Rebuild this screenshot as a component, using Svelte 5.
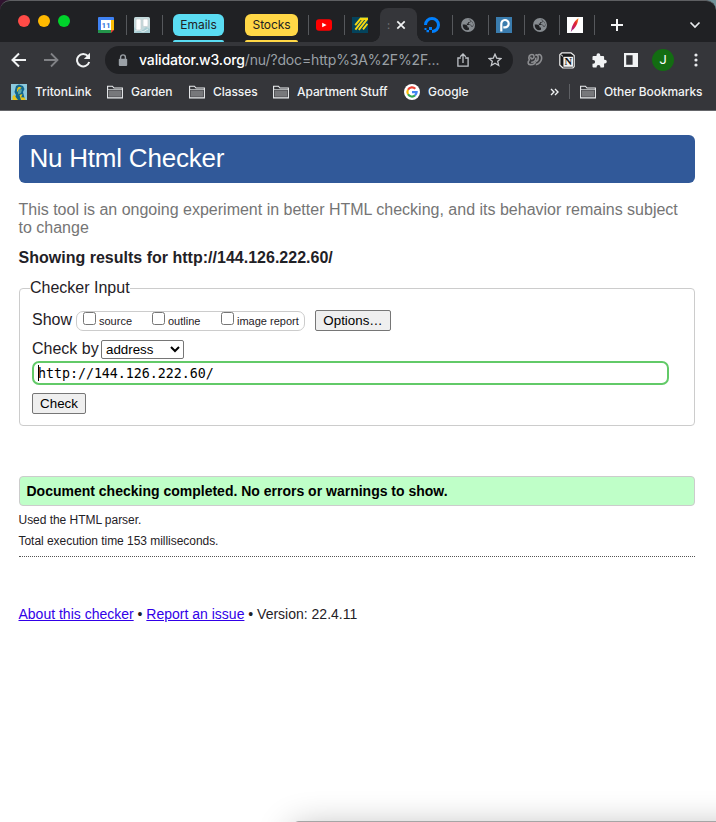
<script>
  let source = $state(false);
  let outline = $state(false);
  let imageReport = $state(false);
  let method = $state('address');
</script>

{#snippet folder()}
  <svg class="folder" width="16" height="14" viewBox="0 0 16 14">
    <path d="M.6 12.9V1.2H5.4L7 3H15.4V12.9Z" fill="#35363a" stroke="#eceef0" stroke-width="1.1" />
    <path d="M1.9 5.4H14.1V11.7H1.9Z" fill="#77787b" />
    <path d="M1 4.5H15" stroke="#c8cacc" stroke-width=".8" />
  </svg>
{/snippet}

{#snippet globe()}
  <svg width="16" height="16" viewBox="0 0 16 16">
    <circle cx="8" cy="8" r="7" fill="#868b90" />
    <path d="M2.7 7.4 5 7.4Q7.6 7.6 7.6 9.6V10.4H9V12.8Q5.4 14 3.6 11.2 2.6 9.4 2.7 7.4ZM8.2 2.8H10.4V4.2Q10.4 5 9.4 5H8.2V6.6H6.8V8H10Q11.2 8 11.2 9.6H13Q13.8 7.4 12.8 5.4 11.2 2.8 8.2 2.8Z" fill="#202124" />
    <path d="M10.8 3.8Q13.4 5.4 13.3 8.2L12 9.2Q11 7.2 8.6 7.2L9 5.8Q11 5.6 10.8 3.8Z" fill="#868b90" />
  </svg>
{/snippet}

<div class="window">
  <div class="frame">
    <div class="tabs">
      <div class="lights"><i class="red"></i><i class="yellow"></i><i class="green"></i></div>
      <div class="tab first">
        <svg width="16" height="16" viewBox="0 0 16 16">
          <path d="M0 1Q0 0 1 0H15Q16 0 16 1V12L12 16H1Q0 16 0 15Z" fill="#3f82f4" />
          <path d="M13 3H16V13H13Z" fill="#fbbc05" /><path d="M3 13H13V16H1Q0 16 0 15V13Z" fill="#23954a" />
          <path d="M13 13H16L13 16Z" fill="#ea4335" />
          <path d="M3 3H13V13H3Z" fill="#fff" />
          <text x="8" y="11" text-anchor="middle" font-family="Roboto, sans-serif" font-size="8" font-weight="700" fill="#3376dd">11</text>
        </svg>
      </div>
      <div class="tab">
        <svg width="16" height="16" viewBox="0 0 16 16">
          <rect width="16" height="16" rx="1.5" fill="#c3d9dc" />
          <path d="M0 10 4 14 9 13 12 10 16 12V16H0Z" fill="#a9cdd3" />
          <path d="M1 14 6 13 9 15 14 12" fill="none" stroke="#dfebec" />
          <rect x="2" y="2" width="5" height="11" rx="1.2" fill="#fff" stroke="#c9cfd0" stroke-width=".8" />
          <rect x="9" y="2" width="5" height="7.5" rx="1.2" fill="#fff" stroke="#c9cfd0" stroke-width=".8" />
        </svg>
      </div>
      <div class="group emails"><span>Emails</span></div>
      <div class="group stocks"><span>Stocks</span></div>
      <div class="divider"></div>
      <div class="tab">
        <svg width="16" height="16" viewBox="0 0 16 16">
          <rect y="2.2" width="16" height="11.6" rx="3" fill="#f00" /><path d="M6.2 5.7 10.6 8 6.2 10.3Z" fill="#fff" />
        </svg>
      </div>
      <div class="tab plain">
        <svg width="16" height="16" viewBox="0 0 16 16">
          <rect width="16" height="16" fill="#04435c" />
          <path d="M3.2 8.2 9 1.2M3.4 12.6 12 1.6M6.8 12.8 15 2.4M11 12.4 15.4 6.8" fill="none" stroke="#f7d911" stroke-width="1.9" />
          <path d="M8.4 .6H16V3H8.4Z" fill="#f7d911" />
        </svg>
      </div>
      <div class="tab active">
        <span class="dots">:</span>
        <svg width="10" height="10" viewBox="0 0 10 10"><path d="M1.3 1.3 8.7 8.7M8.7 1.3 1.3 8.7" stroke="#f1f3f4" stroke-width="1.7" /></svg>
      </div>
      <div class="tab">
        <svg width="16" height="16" viewBox="0 0 16 16">
          <path d="M1.5 8A6.5 6.5 0 1 1 8 14.5" fill="none" stroke="#0080ff" stroke-width="3" />
          <path d="M5 10H8V13H8V16H8V13H5ZM2.5 13H5V15.2H2.5ZM.5 11H2.5V13H.5Z" fill="#0080ff" />
        </svg>
      </div>
      <div class="tab">{@render globe()}</div>
      <div class="tab">
        <svg width="16" height="16" viewBox="0 0 16 16">
          <rect width="16" height="16" fill="#3a7cae" />
          <path d="M5.3 14.5V7A3.7 3.7 0 1 1 8.8 10.4H7.3" fill="none" stroke="#fff" stroke-width="2.2" />
        </svg>
      </div>
      <div class="tab narrow">{@render globe()}</div>
      <div class="tab narrow">
        <svg width="16" height="16" viewBox="0 0 16 16">
          <defs>
            <linearGradient id="quill" x1="1" y1="0" x2="0" y2="1">
              <stop offset="0" stop-color="#f69923" /><stop offset=".35" stop-color="#e4262d" /><stop offset=".7" stop-color="#c01c68" /><stop offset="1" stop-color="#7e2d8d" />
            </linearGradient>
          </defs>
          <rect width="16" height="16" fill="#fff" />
          <path d="M11.5 1.2C8 3 5 8.3 4.4 12.6L3.7 15.3 5.6 12.8C8.4 11.4 11 6 11.5 1.2Z" fill="url(#quill)" />
        </svg>
      </div>
      <svg class="plus" width="12" height="12" viewBox="0 0 12 12"><path d="M6 0V12M0 6H12" stroke="#f4f5f6" stroke-width="2" /></svg>
      <svg class="down" width="12" height="8" viewBox="0 0 12 8"><path d="M1.5 1.5 6 6 10.5 1.5" fill="none" stroke="#e8eaed" stroke-width="1.7" /></svg>
    </div>

    <div class="toolbar">
      <svg class="back" width="16" height="16" viewBox="0 0 16 16"><path d="M15 8H2M8 1.5 1.5 8 8 14.5" fill="none" stroke="#f1f3f4" stroke-width="2" /></svg>
      <svg class="forward" width="16" height="16" viewBox="0 0 16 16"><path d="M1 8H14M8 1.5 14.5 8 8 14.5" fill="none" stroke="#818286" stroke-width="1.8" /></svg>
      <svg class="reload" width="16" height="16" viewBox="0 0 16 16">
        <path d="M13 4.2A6.2 6.2 0 1 0 14.2 10" fill="none" stroke="#f1f3f4" stroke-width="2" /><path d="M15 .8V7H8.8Z" fill="#f1f3f4" />
      </svg>
      <div class="omnibox">
        <svg class="lock" width="10" height="13" viewBox="0 0 10 13">
          <path d="M2.6 5.5V3.3A2.4 2.4 0 0 1 7.4 3.3V5.5" fill="none" stroke="#9aa0a6" stroke-width="1.4" /><rect x=".8" y="4.7" width="8.4" height="7.2" rx="1" fill="#9aa0a6" />
        </svg>
        <span class="url"><b>validator.w3.org</b>/nu/?doc=http%3A%2F%2F...</span>
        <svg class="share" width="12" height="14" viewBox="0 0 12 14"><path d="M3.8 5H.9V13.2H11.1V5H8.2M6 10V1.2M3.2 3.7 6 1 8.8 3.7" fill="none" stroke="#bdc1c6" stroke-width="1.3" /></svg>
        <svg class="star" width="14" height="14" viewBox="0 0 14 14"><path d="M7 1.2 8.7 5.1 12.9 5.5 9.7 8.3 10.7 12.5 7 10.3 3.3 12.5 4.3 8.3 1.1 5.5 5.3 5.1Z" fill="none" stroke="#c6c9cd" stroke-width="1.3" /></svg>
      </div>
      <svg class="loops" width="16" height="14" viewBox="0 0 16 14">
        <path d="M2.4 7.2C1 3.6 2.6 1.5 5 1.5S7.8 4.6 5.8 5.6 3.4 4.6 4.4 4M2.4 7.2C.4 8.8.8 11.6 3.2 11.6 5.8 11.8 8 11.2 8.6 8.6M4.2 9.2C7 9.6 9.4 7.4 8.8 4.6M8.4 2.6C10 .8 11.2 2.4 11.2 4.8S10.4 8 9 8.4M11 1.7C13.6.9 15 3 14.6 5.8S11.8 11.4 8.8 11.6" fill="none" stroke="#8c8d90" stroke-width="1.6" />
      </svg>
      <svg class="notion" width="16" height="17" viewBox="0 0 16 17">
        <path d="M3 .8H11.8L15.2 3.4V14.6L13.8 16H4L.8 13V2.6Z" fill="#18191b" stroke="#eee" stroke-width="1.2" stroke-linejoin="round" />
        <path d="M1.4 2.2 4 4.4" stroke="#eee" />
        <path d="M4.4 4.8H14V14.8H4.4Z" fill="#f2f2f2" />
        <text x="9.2" y="13.2" text-anchor="middle" font-family="Liberation Serif, serif" font-size="10.5" font-weight="700" fill="#151515">N</text>
      </svg>
      <svg class="puzzle" width="15" height="15" viewBox="0 0 15 15">
        <path d="M.5 4Q.5 3 1.5 3H4.5V2.2A1.9 1.9 0 0 1 8.3 2.2V3H11.1Q12.1 3 12.1 4V6.7H12.9A1.9 1.9 0 0 1 12.9 10.5H12.1V13.5Q12.1 14.5 11.1 14.5H8.4V13.8A1.9 1.9 0 0 0 4.6 13.8V14.5H1.5Q.5 14.5 .5 13.5V10.7H1.2A1.9 1.9 0 0 0 1.2 6.9H.5Z" fill="#f1f3f4" />
      </svg>
      <svg class="panel" width="14" height="14" viewBox="0 0 14 14"><path d="M0 0H14V14H0ZM2.2 2.2V11.8H8.6V2.2Z" fill="#f1f3f4" fill-rule="evenodd" /></svg>
      <div class="avatar">J</div>
      <svg class="menu" width="4" height="14" viewBox="0 0 4 14" fill="#e8eaed"><circle cx="2" cy="2" r="1.6" /><circle cx="2" cy="7" r="1.6" /><circle cx="2" cy="12" r="1.6" /></svg>
    </div>

    <div class="bookmarks">
      <svg class="triton" width="16" height="16" viewBox="0 0 16 16">
        <rect width="16" height="16" fill="#8cc9dc" />
        <path d="M2 16 5 11 3.5 8 5 2 8 .5 12 2 13.5 5 12 8 13 12 14 16Z" fill="#10658c" />
        <path d="M6.5 4 8 2.8 10.5 3.4 10 4.6 8 5 6.8 7.4 5.8 7.4ZM1.5 12.5 3.5 10.5 5 13.4 7 16H1.5ZM8.5 11 11.5 10 10.2 13.2 13.6 13.6 14.6 16H10Z" fill="#e6c51d" />
        <path d="M8 5 11 5.5 10 9 7.4 10.6 6.8 8.8Z" fill="#5ba5a2" />
      </svg>
      <span style:width="72px">TritonLink</span>
      {@render folder()}<span style:width="58px">Garden</span>
      {@render folder()}<span style:width="60px">Classes</span>
      {@render folder()}<span style:width="107px">Apartment Stuff</span>
      <svg class="google" width="16" height="16" viewBox="0 0 16 16">
        <circle cx="8" cy="8" r="8" fill="#fff" />
        <g fill="none" stroke-width="2.2">
          <path d="M11.3 4.7A4.6 4.6 0 0 0 4 5.7" stroke="#ea4335" /><path d="M4 5.7A4.6 4.6 0 0 0 4 10.3" stroke="#fbbc05" />
          <path d="M4 10.3A4.6 4.6 0 0 0 11 11.4" stroke="#34a853" /><path d="M11 11.4A4.6 4.6 0 0 0 12.6 8.2H8" stroke="#4285f4" />
        </g>
      </svg>
      <span style:width="41px">Google</span>
      <svg class="more" width="9" height="8" viewBox="0 0 9 8"><path d="M1 1 4 4 1 7M5 1 8 4 5 7" fill="none" stroke="#f1f3f4" stroke-width="1.4" /></svg>
      <div class="rule"></div>
      {@render folder()}<span class="other">Other Bookmarks</span>
    </div>
  </div>

  <main>
    <h1><span>Nu Html Checker</span></h1>
    <p class="intro">This tool is an ongoing experiment in better HTML checking, and its behavior remains subject<br />to change</p>
    <h2><span>Showing results for http://144.126.222.60/</span></h2>
    <form onsubmit={(e) => e.preventDefault()}>
      <fieldset>
        <legend>Checker Input</legend>
        <div class="show">
          <span class="caption">Show</span>
          <div class="options">
            <label style:width="69px"><input type="checkbox" bind:checked={source} />source</label>
            <label style:width="69px"><input type="checkbox" bind:checked={outline} />outline</label>
            <label><input type="checkbox" bind:checked={imageReport} />image report</label>
          </div>
          <button type="button" class="settings">Options…</button>
        </div>
        <div class="by">
          <span class="caption">Check by</span>
          <select bind:value={method}><option value="address">address</option></select>
        </div>
        <div class="field"><i class="caret"></i><span>http://144.126.222.60/</span></div>
        <button class="check">Check</button>
      </fieldset>
    </form>
    <p class="success"><span>Document checking completed. No errors or warnings to show.</span></p>
    <p class="detail parser">Used the HTML parser.</p>
    <p class="detail time">Total execution time 153 milliseconds.</p>
    <hr />
    <footer><a href="#about">About this checker</a> • <a href="#issue">Report an issue</a> • Version: 22.4.11</footer>
  </main>
  <div class="behind"></div>
</div>

<style>
  :global(body) { margin: 0; }
  * { box-sizing: border-box; }
  svg { display: block; flex: none; }
  .window { position: relative; width: 716px; height: 822px; overflow: hidden; background: #fff; }
  .frame { height: 111px; background: linear-gradient(90deg, #30132f 50%, #6f9299 50%); font-family: Inter, sans-serif; }
  .tabs { display: flex; height: 42px; background: #202124; border-top: 1px solid #5e5f62; border-radius: 10px 10px 0 0; }
  .lights { display: flex; gap: 8px; width: 91px; padding: 14px 0 0 18px; }
  .lights i { width: 12px; height: 12px; border-radius: 50%; }
  .red { background: #ff4b47; }
  .yellow { background: #ffb900; }
  .green { background: #00d32b; }
  .tab { position: relative; flex: none; width: 36px; padding: 16px 0 0 7px; }
  .tab.narrow { width: 35px; }
  .tab::after { content: ''; position: absolute; right: 0; top: 14px; width: 1px; height: 20px; background: #56585c; }
  .tab.plain { width: 35px; }
  .tab.plain::after { display: none; }
  .divider { width: 11px; height: 20px; margin-top: 14px; border-right: 1px solid #56585c; }
  .tab.active { display: flex; width: 37px; height: 34px; margin-top: 7px; padding: 12px 0 0 8px; background: #35363a; border-radius: 8px 8px 0 0; }
  .tab.active::before, .tab.active::after { content: ''; position: absolute; top: auto; bottom: 0; width: 8px; height: 8px; background: radial-gradient(circle at 0 0, transparent 7.5px, #35363a 8px); }
  .tab.active::before { left: -8px; }
  .tab.active::after { right: -8px; background: radial-gradient(circle at 100% 0, transparent 7.5px, #35363a 8px); }
  .dots { width: 8px; margin-left: -1px; margin-right: 1px; font-size: 11px; line-height: 10px; color: #77797c; }
  .group { display: flex; flex: none; flex-direction: column; justify-content: space-between; margin-top: 13px; font-size: 12px; line-height: 22px; text-align: center; color: #202124; }
  .group span { border-radius: 6px; background: var(--tint); }
  .group::after { content: ''; height: 2px; background: var(--tint); border-radius: 2px 2px 0 0; }
  .emails { --tint: #5adcf2; width: 51px; margin-left: 10px; }
  .stocks { --tint: #ffd746; width: 53px; margin-left: 21px; letter-spacing: -.1px; }
  .plus { margin: 18px 0 0 16px; }
  .down { margin: 20px 0 0 66px; }
  .toolbar { display: flex; align-items: center; height: 36px; background: #35363a; }
  .back { margin-left: 11px; }
  .forward { margin-left: 16px; }
  .reload { margin-left: 16px; }
  .omnibox { display: flex; flex: none; align-items: center; width: 408px; height: 28px; margin-left: 14px; border-radius: 14px; background: #202124; }
  .lock { margin-left: 13px; }
  .url { width: 310px; margin-left: 11px; font-size: 14px; line-height: 20px; letter-spacing: -.14px; white-space: nowrap; color: #9aa0a6; }
  .url b { font-weight: 500; color: #fff; }
  .share { margin-left: 8px; }
  .star { margin-left: 19px; }
  .loops { margin-left: 14px; }
  .notion { margin-left: 16px; }
  .puzzle { margin-left: 17px; }
  .panel { margin-left: 17px; }
  .avatar { width: 22px; height: 22px; margin-left: 14px; border-radius: 50%; background: #136d12; color: #fff; font: 13px/22px Roboto, sans-serif; text-align: center; }
  .menu { margin-left: 20px; }
  .bookmarks { display: flex; align-items: center; height: 33px; padding: 0 0 5px 11px; background: #35363a; border-bottom: 1px solid #65666a; font-size: 12px; font-weight: 500; letter-spacing: -.08px; color: #f1f3f4; white-space: nowrap; }
  .bookmarks span { flex: none; margin-left: 8px; line-height: 20px; }
  .bookmarks .other { letter-spacing: -.1px; }
  .more { margin-left: 81px; }
  .rule { width: 1px; height: 15px; margin: 0 10px; background: #5e6064; }

  main { width: 676px; margin-left: 19px; font-family: 'Liberation Sans', Arial, sans-serif; color: #1f2126; }
  p, h1, h2 { margin: 0; white-space: nowrap; }
  h1 { height: 48px; margin-top: 24px; padding-left: 10.5px; border-radius: 6px; background: #315999; color: #fff; font-size: 26px; line-height: 46px; font-weight: 400; letter-spacing: -.22px; }
  .intro { margin: 18px 0 0 -.5px; font-size: 16px; line-height: 18px; color: #757575; }
  h2 { margin: 12px 0 0 -.5px; font-size: 16px; line-height: 18px; letter-spacing: .01px; }
  form { margin-top: 12px; }
  fieldset { min-width: 0; height: 147px; margin: 0; padding: 12px 12px 0; border: 1px solid #ccc; border-radius: 4px; }
  legend { height: 19px; margin-left: -2px; padding: 0; font-size: 16px; line-height: 18px; }
  .show, .by { display: flex; align-items: flex-start; }
  .show { height: 30px; }
  .by { height: 21px; }
  .caption { font-size: 16px; line-height: 19px; white-space: nowrap; }
  .show .caption { width: 44px; }
  .by .caption { width: 69px; line-height: 18px; }
  .options { display: flex; width: 229px; height: 20px; margin-top: 1px; padding-left: 6px; border: 1px solid #ccc; border-radius: 7px; }
  label { display: flex; font-size: 11px; line-height: 19px; white-space: nowrap; }
  label input { width: 13px; height: 13px; margin: 0 3px 0 0; }
  button { display: block; height: 21px; padding: 0; border: 1px solid #767676; border-radius: 2px; background: #efefef; color: #000; font: 13.333px/19px 'Liberation Sans', Arial, sans-serif; }
  .settings { width: 76px; margin-left: 10px; }
  select { width: 83px; height: 19px; padding: 0; border: 1px solid #767676; border-radius: 2px; background-color: #fff; color: #000; font: 13.333px 'Liberation Sans', Arial, sans-serif; }
  .field { display: flex; align-items: center; width: 637px; height: 24px; padding-left: 4px; border: 2px solid #62ca68; border-radius: 7px; color: #000; font: 13.333px/20px 'DejaVu Sans Mono', monospace; letter-spacing: -.04px; }
  .field span { padding-top: 1px; }
  .caret { width: 1px; height: 16px; margin-right: -1px; background: #000; }
  .check { width: 54px; margin-top: 8px; }
  .success { height: 30px; margin-top: 50px; padding-left: 6.5px; border: 1px solid #ccc; border-radius: 4px; background: #bfffc8; color: #000; font-size: 14px; line-height: 28px; font-weight: 700; }
  .detail { margin-left: -.5px; font-size: 12px; line-height: 16px; letter-spacing: -.04px; }
  .parser { margin-top: 6px; }
  .time { margin-top: 5px; }
  hr { height: 1px; margin: 7px 0 0; border: 0; border-top: 1px dotted #555; }
  footer { margin: 48px 0 0 -.5px; font-size: 14px; line-height: 18px; white-space: nowrap; }
  a { color: #3100e8; }
  .behind { position: absolute; left: 293px; top: 821px; width: 500px; height: 200px; border-radius: 6px 0 0; background: #a5a5a5; box-shadow: 0 8px 36px rgba(0, 0, 0, .32); }
</style>
